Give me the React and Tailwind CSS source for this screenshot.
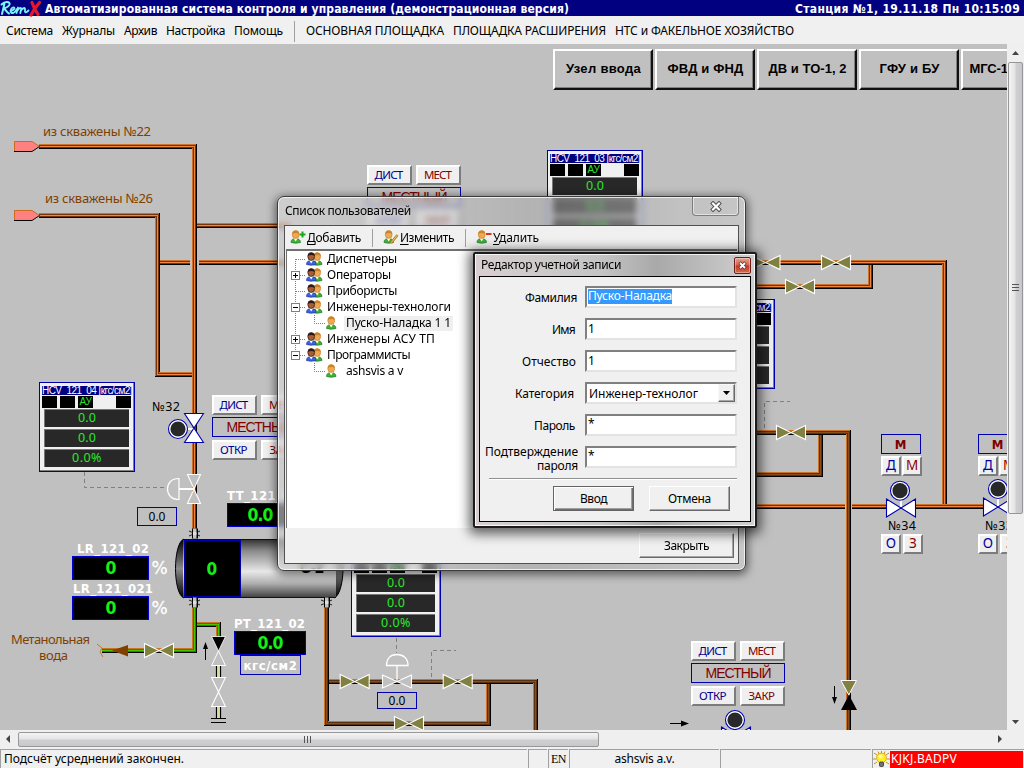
import { useLayoutEffect, useRef } from "react";

const UI = "font-['Noto_Sans','DejaVu_Sans',sans-serif]";

/* Text run whose letter spacing is adjusted so it is exactly `w` pixels wide. */
function Fit({ w, children, className = "" }) {
  const ref = useRef(null);
  useLayoutEffect(() => {
    const el = ref.current;
    el.style.letterSpacing = "0px";
    const n = el.textContent.length;
    el.style.letterSpacing = (w - el.getBoundingClientRect().width) / n + "px";
  }, [w, children]);
  return (
    <span ref={ref} className={`inline-block whitespace-pre ${className}`}>
      {children}
    </span>
  );
}

/* ---------- diagram primitives ---------- */

const CORE = { gas: "#f0824c", cond: "#8a4d22", water: "#45c400" };
const EDGE = { gas: "#7a3208", cond: "#5a3212", water: "#3f7a08" };

function Pipe({ pts, kind = "gas" }) {
  const p = { points: pts, fill: "none", strokeLinejoin: "miter" };
  return (
    <g shapeRendering="crispEdges">
      <polyline {...p} stroke="#000" strokeWidth="5" />
      <polyline {...p} stroke="#cc7426" strokeWidth="4" transform="translate(-0.5 -0.5)" />
      <polyline {...p} stroke={EDGE[kind]} strokeWidth="3" />
      <polyline {...p} stroke={CORE[kind]} strokeWidth="1" />
    </g>
  );
}

function Valve({ x, y, vertical, fill = "#808040", stroke = "#fff", len = 14.5, half = 7 }) {
  return (
    <path
      transform={`translate(${x} ${y})${vertical ? " rotate(90)" : ""}`}
      d={`M${-len} ${-half}L0 0L${-len} ${half}ZM${len} ${-half}L0 0L${len} ${half}Z`}
      fill={fill}
      stroke={stroke}
      strokeWidth="1.1"
    />
  );
}

function Motor({ x, y }) {
  return (
    <g>
      <circle cx={x} cy={y} r="9.5" fill="#fff" stroke="#0000b0" strokeWidth="1.1" />
      <circle cx={x} cy={y} r="7.6" fill="#282828" />
    </g>
  );
}

function Inlet({ y }) {
  return (
    <g strokeWidth="1" fill="none">
      <path d={`M14.5 ${y - 5}H32L39.5 ${y}L32 ${y + 5}H14.5Z`} fill="#ff8080" />
      <path d={`M39.5 ${y}L32 ${y - 5}H14.5V${y + 5}`} stroke="#cc6a20" />
      <path d={`M14 ${y + 5}H32L39.5 ${y}`} stroke="#000" />
    </g>
  );
}

function Flange({ x, y }) {
  return (
    <g>
      <rect x={x - 2.5} y={y - 5} width="6" height="10" fill="#000" />
      <rect x={x - 1.5} y={y - 5} width="3.5" height="10" fill="#c4c4c4" />
      <path
        d={`M${x - 5.5} ${y - 2.5}L${x - 2} ${y - 1}H${x + 2}L${x + 5.5} ${y - 2.5}M${x - 5.5} ${y + 2.5}L${x - 2} ${y + 1}H${x + 2}L${x + 5.5} ${y + 2.5}`}
        fill="none"
        stroke="#111"
        strokeWidth="0.9"
      />
      <rect x={x - 1.5} y={y - 1.5} width="3.500" height="3" fill="#e0e0e0" />
    </g>
  );
}

function Label({ x, y, w, size = 13, fill = "#804000", bold, children }) {
  return (
    <text
      x={x}
      y={y}
      fontSize={size}
      fill={fill}
      textLength={w}
      className={
        bold ? "font-['DejaVu_Sans_Condensed','DejaVu_Sans',sans-serif] font-bold" : UI
      }
    >
      {children}
    </text>
  );
}

function Percent({ x, y }) {
  return (
    <text x={x} y={y} fontSize="17" fill="#fff" stroke="#fff" strokeWidth="0.300" textLength="18" className="font-['DejaVu_Sans',sans-serif]">%</text>
  );
}

function Scheme() {
  return (
    <svg className="block" width="1007" height="686" viewBox="0 44 1007 686">
      <defs>
        <linearGradient id="tank" x1="0" y1="0" x2="0" y2="1">
          <stop offset="0" stopColor="#303030" />
          <stop offset="0.2" stopColor="#8a8a8a" />
          <stop offset="0.55" stopColor="#e8e8e8" />
          <stop offset="0.75" stopColor="#b0b0b0" />
          <stop offset="1" stopColor="#3c3c3c" />
        </linearGradient>
        <linearGradient id="cap" x1="0" y1="0" x2="0" y2="1">
          <stop offset="0" stopColor="#000" />
          <stop offset="0.5" stopColor="#8a8a8a" />
          <stop offset="1" stopColor="#000" />
        </linearGradient>
      </defs>

      <Pipe pts="160,262.5 190,262.5" />
      <Pipe pts="199,262.5 290,262.5" />
      <Pipe pts="39,146.5 194.5,146.5 194.5,530" />
      <Pipe pts="39,215.5 157.5,215.5 157.5,374.5 192,374.5" />
      <Pipe pts="197,225.5 290,225.5" />
      <Pipe pts="740,262.5 944.5,262.5 944.5,504" />
      <Pipe pts="740,286.5 870.5,286.5 870.5,265" />
      <Pipe pts="740,506.5 845,506.5" />
      <Pipe pts="852,506.5 888,506.5" />
      <Pipe pts="914,506.5 985,506.5" />
      <Pipe kind="cond" pts="740,432.5 848.5,432.5 848.5,735" />
      <Pipe kind="cond" pts="740,474.5 820.5,474.5 820.5,435" />
      <Pipe kind="cond" pts="326.5,604 326.5,723.5 488.5,723.5 488.5,684" />
      <Pipe kind="cond" pts="329,681.5 535.5,681.5 535.5,735" />
      <Pipe kind="water" pts="194.5,604 194.5,650.5 102,650.5" />
      <Pipe kind="water" pts="197,624.5 218.5,624.5 218.5,637" />

      <g fill="none" stroke="#808080" strokeDasharray="4 3">
        <path d="M84.5 472V487.5H167" />
        <path d="M764.5 428V401.5H790" />
        <path d="M396.5 638V653" />
        <path d="M431.5 677V650.5H456" />
      </g>

      <Inlet y={146.5} />
      <Inlet y={215.5} />

      {/* separator vessel */}
      <path d="M184 539C178 541 175.500 556 175.500 568.500S178 596 184 598Z" fill="url(#cap)" stroke="#000" />
      <path d="M334 539C340 541 343 556 343 568.500S340 596 334 598Z" fill="url(#cap)" stroke="#000" />
      <rect x="183" y="539" width="153" height="59" fill="url(#tank)" />
      <path d="M183 539.500H336M183 597.500H336" stroke="#111" />
      <rect x="184.500" y="540.500" width="56" height="56" fill="#000" stroke="#0000b0" />
      <Label x={206.500} y={575} w={11} size={17} fill="#14f014" bold>0</Label>
      <text x="300" y="573" fontSize="16" textLength="24" className="font-['Liberation_Sans',sans-serif] font-bold">С-2</text>

      <Flange x={194.500} y={533.500} />
      <Flange x={194.500} y={602.500} />
      <Flange x={326.500} y={602.500} />

      {/* drain branch */}
      <path d="M216.500 664V678M220.500 664V678M216.500 706V719M220.500 706V719" stroke="#000" strokeWidth="1.200" />
      <path d="M218.500 664V678M218.500 706V719" stroke="#dcdca0" strokeWidth="2.600" />
      <path d="M211 718.500H226M211 722.500H226" stroke="#000" />
      <path d="M211.500 636.500H225.500L218.500 651Z" fill="#000" stroke="#fff" strokeWidth="0.800" />
      <path d="M211.500 665.500H225.500L218.500 651Z" fill="#c0c0c0" stroke="#fff" />
      <Valve x={218.5} y={692} vertical fill="#c0c0c0" />
      <path d="M205.500 660V648" stroke="#000" />
      <path d="M205.500 642L208 649H203Z" />

      <Valve x={159} y={650.5} />
      <path d="M112 650.500L128 645V656.500Z" fill="#804000" />
      <path d="M97 644L102 648L100 652L103 657" fill="none" stroke="#cc7426" />

      <Valve x={354.7} y={681.5} />
      <Valve x={457.7} y={681.5} />
      <Valve x={409} y={723.5} />
      <Valve x={765.5} y={262.5} />
      <Valve x={836} y={262.5} />
      <Valve x={800} y={286.5} />
      <Valve x={791} y={432.5} />

      {/* control valves with diaphragm actuators */}
      <Valve x={397} y={681.5} fill="#c0c0c0" half={6.5} />
      <path d="M386.500 665.500C386.500 658 391 654.500 397 654.500S408 658 408 665.500ZM397 665.500V681" fill="#c0c0c0" stroke="#fff" strokeWidth="1.300" />
      <Valve x={194} y={489} vertical fill="#c0c0c0" half={6.5} />
      <path d="M179 478.500C171.500 478.500 167.500 483 167.500 489S171.500 499.500 179 499.500Z" fill="#c0c0c0" stroke="#fff" strokeWidth="1.200" />
      <path d="M179 489H194" stroke="#fff" strokeWidth="2" />

      {/* motor valves */}
      <path d="M187 429H194" stroke="#fff" strokeWidth="2" />
      <Valve x={194} y={428} vertical fill="#fff" stroke="#0000b0" half={9.5} />
      <Motor x={178} y={429} />
      <path d="M901 500V507M998 498V506" stroke="#fff" strokeWidth="2" />
      <Valve x={901} y={508} fill="#fff" stroke="#0000b0" half={9} />
      <Motor x={900} y={490.7} />
      <Valve x={998} y={507} fill="#fff" stroke="#0000b0" half={9} />
      <Motor x={998} y={489} />
      <Valve x={736} y={736} fill="#fff" stroke="#0000b0" half={9} />
      <Motor x={735} y={720} />

      <path d="M841 680.500H856.500L848.800 695Z" fill="#808040" stroke="#fff" />
      <path d="M841 710H857L849 695Z" />
      <path d="M834.500 686V698M670 723.500H682" stroke="#000" />
      <path d="M834.500 704L832 697H837ZM689 723.500L681 720.500V726.500Z" />

      <Label x={43} y={136} w={108}>из скважены №22</Label>
      <Label x={45} y={203} w={108}>из скважены №26</Label>
      <Label x={11} y={644} w={79}>Метанольная</Label>
      <Label x={39} y={660} w={29}>вода</Label>
      <Label x={152} y={411} w={28} size={12.500} fill="#000">№32</Label>
      <Label x={888} y={530} w={28} size={12.500} fill="#000">№34</Label>
      <Label x={985} y={530} w={28} size={12.500} fill="#000">№33</Label>

      <Label x={227} y={500} w={72} size={13} fill="#fff" bold>TT_121_02</Label>
      <Label x={77} y={553} w={72} size={13} fill="#fff" bold>LR_121_02</Label>
      <Label x={73} y={593} w={80} size={13} fill="#fff" bold>LR_121_021</Label>
      <Label x={234} y={628} w={71} size={13} fill="#fff" bold>PT_121_02</Label>
      <Percent x={151.5} y={574} />
      <Percent x={151.5} y={614} />
    </svg>
  );
}

/* ---------- diagram widgets ---------- */

const BEVEL =
  "flex items-center justify-center bg-[#efefef] border-2 border-t-white border-l-white border-r-[#7c7c7c] border-b-[#7c7c7c]";

function ModeButton({ w, red, children }) {
  return (
    <div className={`${BEVEL} h-5 w-[45px] pr-0.5 text-[11.5px] leading-none ${red ? "text-[#800000]" : "text-[#000090]"}`}>
      <Fit w={w}>{children}</Fit>
    </div>
  );
}

function ModeGroup({ className }) {
  return (
    <div className={`absolute flex w-[94px] flex-col ${className}`}>
      <div className="flex justify-between">
        <ModeButton w={28}>ДИСТ</ModeButton>
        <ModeButton w={27} red>МЕСТ</ModeButton>
      </div>
      <div className="mt-0.5 flex h-5 items-center justify-center border border-[#0000b0] font-['Liberation_Sans',sans-serif] text-[14px] leading-none text-[#800000]">
        <Fit w={65}>МЕСТНЫЙ</Fit>
      </div>
      <div className="mt-[3px] flex justify-between">
        <ModeButton w={27}>ОТКР</ModeButton>
        <ModeButton w={26} red>ЗАКР</ModeButton>
      </div>
    </div>
  );
}

function SmallButton({ red, children }) {
  return (
    <div className={`${BEVEL} size-5 text-[13.5px] leading-none ${red ? "text-[#900000]" : "text-[#0000a0]"}`}>{children}</div>
  );
}

function MiniGroup({ className }) {
  return (
    <div className={`absolute flex w-[42px] flex-col ${className}`}>
      <div className="flex h-5 w-10 items-center justify-center border border-[#0000b0] pr-px font-['DejaVu_Sans_Condensed','DejaVu_Sans',sans-serif] text-[13px] font-bold leading-none text-[#800000]">М</div>
      <div className="mt-0.5 flex gap-px">
        <SmallButton>Д</SmallButton>
        <SmallButton red>М</SmallButton>
      </div>
      <div className="mt-[58px] flex gap-0.5">
        <SmallButton>О</SmallButton>
        <SmallButton red>З</SmallButton>
      </div>
    </div>
  );
}

function Bar({ children }) {
  return (
    <div className="flex h-[18px] items-center justify-center border-l border-t border-[#777] bg-[#282828] text-[12.5px] leading-none text-[#28e828]">
      {children}
    </div>
  );
}

function Controller({ title, className }) {
  return (
    <div className={`absolute flex h-[90px] flex-col border border-[#0000b0] bg-[#f0f0f0] shadow-[inset_-1px_-1px_0_#808080] ${className}`}>
      <div className="mx-0.5 mt-[3px] flex h-[9px] items-center overflow-hidden bg-[#000080] pt-px font-['Liberation_Sans',sans-serif] text-[10px] leading-none text-white">
        <Fit w={90}>{title}</Fit>
      </div>
      <div className="ml-0.5 mr-[3px] mt-px flex h-3 gap-[3px]">
        <div className="w-[15px] bg-black" />
        <div className="w-[15px] bg-black" />
        <div className="flex w-[15px] items-center justify-center bg-black font-['Liberation_Sans',sans-serif] text-[10px] leading-none text-[#28e828]"><Fit w={12}>АУ</Fit></div>
        <div className="ml-auto w-[15px] bg-black" />
      </div>
      <div className="ml-1 mr-[5px] mt-[1px] flex flex-col gap-0.5">
        <Bar><Fit w={18}>0.0</Fit></Bar>
        <Bar><Fit w={18}>0.0</Fit></Bar>
        <Bar><Fit w={30}>0.0%</Fit></Bar>
      </div>
    </div>
  );
}

function Display({ className, w, children }) {
  return (
    <div className={`absolute flex h-6 items-center justify-center border border-[#0000d0] bg-black pt-0.5 font-['DejaVu_Sans_Condensed','DejaVu_Sans',sans-serif] text-[17.5px] font-bold leading-none text-[#14f014] ${className}`}>
      <Fit w={w}>{children}</Fit>
    </div>
  );
}

function NavButton({ w, children }) {
  return (
    <div className="flex h-[41px] w-[100px] shrink-0 items-center justify-center border-2 border-b-[#101010] border-l-white border-r-[#101010] border-t-white bg-[#c0c0c0] pb-0.5 pl-px font-['Liberation_Sans',sans-serif] text-[13px] font-bold leading-none text-black shadow-[inset_-1px_-1px_0_#808080]">
      <Fit w={w}>{children}</Fit>
    </div>
  );
}

/* ---------- icons ---------- */

function Person({ x = 0, hair = "#c8842c", skin = "#f0a850", body = "#3fae3a", dark = "#1f7a28" }) {
  return (
    <g transform={`translate(${x} 0)`}>
      <path d="M0.500 12.500C0.500 9.500 2.500 8.500 5 8.500S10 9.500 10 12.500Q5 14 0.500 12.500Z" fill={body} stroke={dark} strokeWidth="0.700" />
      <path d="M3 8L5.200 11.500L7.300 8Z" fill="#fff" />
      <ellipse cx="5.200" cy="4.500" rx="3.400" ry="4" fill={skin} stroke={hair} strokeWidth="0.700" />
      <path d="M1.800 4C1.500 0 8.800 -0.500 8.700 4C7 2.600 4 2.500 1.800 4Z" fill={hair} />
    </g>
  );
}

function UserIcon() {
  return (
    <svg width="11" height="14" viewBox="0 0 11 14" className="shrink-0">
      <Person />
    </svg>
  );
}

function GroupIcon() {
  return (
    <svg width="17" height="14" viewBox="0 0 17 14" className="shrink-0">
      <Person x={6} />
      <Person x={0} hair="#2a1a18" skin="#a85c30" body="#3b62e0" dark="#1c389a" />
    </svg>
  );
}

function ActionIcon({ kind }) {
  return (
    <svg width="16" height="15" viewBox="0 0 16 15" className="shrink-0">
      <Person x={0.5} />
      {kind === "add" && <path d="M9.500 4.500H15.500M12.500 1.500V7.500" stroke="#18a818" strokeWidth="2" />}
      {kind === "edit" && (
        <>
          <path d="M8 13L14.500 5" stroke="#b07818" strokeWidth="2.400" />
          <path d="M8.200 12.600L14.300 5.200" stroke="#f6d060" strokeWidth="1" />
        </>
      )}
      {kind === "del" && <path d="M10 4H15.500" stroke="#e03020" strokeWidth="2" />}
    </svg>
  );
}

function Logo() {
  return (
    <svg width="42" height="17" viewBox="0 0 42 17" className="shrink-0" fill="none" strokeLinecap="round" strokeLinejoin="round">
      <path d="M4.500 3.500L2 14M1.500 4.500C5 0.800 10.500 1.500 9.500 4.500C8.500 7 5.500 8 3.500 8.500C6 9.500 7 12.500 9 13.500" stroke="#7ff4ff" strokeWidth="2" />
      <path d="M10.500 11C13.500 10.500 15.500 8.500 14 7.500C12 7 10 10 10.800 12C12 14.300 15 12.500 17 9M18 7.500L16.500 13M17.500 10.500C20 7 21.500 7 21 10L20.300 13M21 10.500C23.500 7 25.500 7.500 25 10C24.500 12.500 25.500 13.500 28.500 10.500" stroke="#7ff4ff" strokeWidth="1.800" />
      <path d="M32 2.500C33.500 7 35.500 11 38 14.500M39.500 2.500C36.500 6 33.500 10 31 15" stroke="#e81428" strokeWidth="3.200" />
    </svg>
  );
}

function BulbIcon() {
  return (
    <svg width="17" height="17" viewBox="0 0 17 17" className="shrink-0">
      <path d="M8.500 0V3M1 2L4 4M16 2L13 4M0 8H3M17 8H14M1 13L4 11M16 13L13 11M5 0.500L6 3M12 0.500L11 3" stroke="#c89020" />
      <circle cx="8.500" cy="7" r="4.900" fill="#ffee20" stroke="#d0a010" strokeWidth="0.800" />
      <ellipse cx="7.500" cy="5.500" rx="2" ry="1.800" fill="#fffcc0" />
      <rect x="6.500" y="11" width="4" height="4.500" rx="1" fill="#707070" stroke="#333" strokeWidth="0.800" />
    </svg>
  );
}

/* ---------- windows ---------- */

function TreeRow({ kind, expander, w, selected, last, children }) {
  const child = kind === "user";
  return (
    <div className="flex h-4 items-center">
      <svg width={child ? 39 : 19} height="16" className="shrink-0">
        <g stroke="#808080" strokeDasharray="1 1" fill="none">
          {child ? (
            <>
              <path d="M27.500 0V8.500H38" />
              {!last && <path d="M8.500 0V16" />}
            </>
          ) : (
            <path d={`M8.500 ${kind === "first" ? 8 : 0}V${last ? 8 : 16}M9 8.500H19`} />
          )}
        </g>
        {expander && (
          <>
            <rect x="4.500" y="4.500" width="8" height="8" fill="#fff" stroke="#808080" />
            <path d={expander === "+" ? "M6 8.500H11M8.500 6V11" : "M6 8.500H11"} stroke="#000" />
          </>
        )}
      </svg>
      {child ? <UserIcon /> : <GroupIcon />}
      <div className={`flex h-[15px] items-center leading-none ${child ? "ml-[7px] px-0.5" : "ml-1"} ${selected ? "bg-[#efefef]" : ""}`}>
        <Fit w={w}>{children}</Fit>
      </div>
    </div>
  );
}

function ToolItem({ kind, w, first, rest }) {
  return (
    <div className="flex items-center gap-px">
      <ActionIcon kind={kind} />
      <Fit w={w}><u className="underline-offset-2">{first}</u>{rest}</Fit>
    </div>
  );
}

function UsersWindow() {
  return (
    <div className={`absolute left-[277px] top-[196px] flex h-[375px] w-[469px] flex-col rounded-[7px] border border-[#3c3c3c] bg-[linear-gradient(90deg,rgba(215,215,215,.6),rgba(165,165,165,.5)_55%,rgba(205,205,205,.55))] text-[12px] leading-none text-black shadow-[0_2px_9px_2px_rgba(0,0,0,.5),inset_0_0_0_1px_rgba(255,255,255,.75)] backdrop-blur-[3px] ${UI}`}>
      <div className="flex h-7 items-start justify-between pl-[7px] pr-[6px]">
        <div className="pt-[8px]"><Fit w={126}>Список пользователей</Fit></div>
        <div className="flex h-[19px] w-[47px] items-center justify-center rounded-b-[4px] border border-t-0 border-[#7d7d7d] shadow-[inset_0_0_0_1px_rgba(255,255,255,.5)]">
          <svg width="12" height="11" viewBox="0 0 14 12">
            <path d="M3.500 2.500L10.500 9.500M10.500 2.500L3.500 9.500" stroke="#454545" strokeWidth="4.600" strokeLinecap="square" />
            <path d="M3.500 2.500L10.500 9.500M10.500 2.500L3.500 9.500" stroke="#fff" strokeWidth="2.600" strokeLinecap="square" />
          </svg>
        </div>
      </div>
      <div className="mx-[6px] mb-[6px] flex flex-1 flex-col border border-[#505050] bg-[#f0f0f0]">
        <div className="flex h-[23px] items-center pl-[5px]">
          <ToolItem kind="add" w={54} first="Д" rest="обавить" />
          <div className="ml-[11px] h-[18px] w-px bg-[#a0a0a0]" />
          <div className="ml-[10px]"><ToolItem kind="edit" w={54} first="И" rest="зменить" /></div>
          <div className="ml-[11px] h-[18px] w-px bg-[#a0a0a0]" />
          <div className="ml-[10px]"><ToolItem kind="del" w={46} first="У" rest="далить" /></div>
        </div>
        <div className="mx-px flex h-[279px] flex-col border-l border-t-2 border-[#707070] bg-white">
          <TreeRow kind="first" w={70}>Диспетчеры</TreeRow>
          <TreeRow expander="+" w={64}>Операторы</TreeRow>
          <TreeRow w={70}>Прибористы</TreeRow>
          <TreeRow expander="-" w={124}>Инженеры-технологи</TreeRow>
          <TreeRow kind="user" w={105} selected>Пуско-Наладка 1 1</TreeRow>
          <TreeRow expander="+" w={108}>Инженеры АСУ ТП</TreeRow>
          <TreeRow expander="-" last w={83}>Программисты</TreeRow>
          <TreeRow kind="user" last w={57}>ashsvis a v</TreeRow>
        </div>
        <div className="flex flex-1 items-center justify-end pr-1">
          <PushButton className="w-[95px]" w={45}>Закрыть</PushButton>
        </div>
      </div>
    </div>
  );
}

function PushButton({ className, w, focused, children }) {
  return (
    <div className={`flex h-[25px] items-center justify-center bg-[#f0f0f0] pt-px ${focused ? "border border-[#646464] shadow-[inset_1px_1px_0_#fff,inset_-1px_-1px_0_#6e6e6e,inset_-2px_-2px_0_#a0a0a0]" : "border border-b-[#696969] border-l-white border-r-[#696969] border-t-white shadow-[inset_-1px_-1px_0_#a6a6a6]"} ${className}`}>
      <Fit w={w}>{children}</Fit>
    </div>
  );
}

const FIELD =
  "flex h-[22px] w-[152px] border-2 border-b-[#e3e3e3] border-l-[#808080] border-r-[#e3e3e3] border-t-[#808080] bg-white";

function Row({ label, w, pad, children }) {
  return (
    <div className="flex h-[22px] items-center justify-end">
      <div className={`pt-0.5 ${pad}`}><Fit w={w}>{label}</Fit></div>
      {children}
    </div>
  );
}

function EditorWindow() {
  return (
    <div className={`absolute left-[473px] top-[252px] flex h-[276px] w-[284px] flex-col rounded-[2px] border-2 border-[#1c1c1c] bg-[linear-gradient(90deg,#d8cfd0,#c4c4c4_45%,#a9a9a9_65%,#d0d0d0)] text-[12px] leading-none text-black shadow-[0_2px_12px_4px_rgba(0,0,0,.6),inset_0_0_0_1px_rgba(255,255,255,.8)] ${UI}`}>
      <div className="flex h-[22px] items-center justify-between pl-[6px] pr-[4px]">
        <Fit w={140}>Редактор учетной записи</Fit>
        <div className="flex size-[17px] items-center justify-center rounded-[2px] border border-[#6a2018] bg-[linear-gradient(#e8a292,#d4614a_48%,#bf3a22_52%,#d86a50)] shadow-[inset_0_0_0_1px_rgba(255,255,255,.35)]">
          <svg width="9" height="9" viewBox="0 0 9 9">
            <path d="M1.500 1.500L7.500 7.500M7.500 1.500L1.500 7.500" stroke="#5a3a3a" strokeWidth="3.200" />
            <path d="M2 2L7 7M7 2L2 7" stroke="#fff" strokeWidth="1.800" />
          </svg>
        </div>
      </div>
      <div className="mx-[4px] mb-[4px] flex flex-1 flex-col border border-black bg-[#f0f0f0] pl-[5px] pr-[13px] pt-[9px]">
        <div className="flex flex-col gap-[10px]">
          <Row label="Фамилия" w={52} pad="pr-2">
            <div className={FIELD}>
              <div className="my-px ml-px h-[15px] bg-[#3399ff] pt-px text-white"><Fit w={84}>Пуско-Наладка</Fit></div>
            </div>
          </Row>
          <Row label="Имя" w={23} pad="pr-[10px]"><div className={`${FIELD} pl-px pt-[3px]`}>1</div></Row>
          <Row label="Отчество" w={54} pad="pr-[9px]"><div className={`${FIELD} pl-px pt-[3px]`}>1</div></Row>
          <Row label="Категория" w={59} pad="pr-[11px]">
            <div className={`${FIELD} justify-between`}>
              <div className="pl-0.5 pt-1"><Fit w={109}>Инженер-технолог</Fit></div>
              <div className="flex w-[17px] items-center justify-center border border-b-[#696969] border-l-[#f8f8f8] border-r-[#696969] border-t-[#f8f8f8] bg-[#f0f0f0] shadow-[inset_-1px_-1px_0_#a6a6a6]">
                <svg width="7" height="4"><path d="M0 0H7L3.500 4Z" /></svg>
              </div>
            </div>
          </Row>
          <Row label="Пароль" w={41} pad="pr-[10px]"><div className={`${FIELD} pl-px pt-0.5`}>*</div></Row>
          <div className="flex h-[22px] items-start justify-end">
            <div className="-mt-px flex flex-col items-end pr-[7px] leading-[14px]">
              <Fit w={93}>Подтверждение</Fit>
              <Fit w={41}>пароля</Fit>
            </div>
            <div className={`${FIELD} pl-px pt-0.5`}>*</div>
          </div>
        </div>
        <div className="ml-1 mt-[10px] h-0.5 border-b border-t border-b-white border-t-[#909090]" />
        <div className="mt-[6px] flex justify-end gap-[15px] pr-[7px]">
          <PushButton className="w-[81px]" w={27} focused>Ввод</PushButton>
          <PushButton className="w-[81px]" w={43}>Отмена</PushButton>
        </div>
      </div>
    </div>
  );
}

/* ---------- shell ---------- */

const PANEL = "border-l border-t border-[#a0a0a0] flex items-center";

export default function App() {
  return (
    <div className={`relative flex h-[768px] w-[1024px] flex-col overflow-hidden bg-[#f0f0f0] text-[12px] leading-none text-black ${UI}`}>
      <header className="flex h-[16px] items-center bg-[#000080] pr-[4px] font-['DejaVu_Sans_Condensed','DejaVu_Sans',sans-serif] text-[12px] font-bold text-white">
        <Logo />
        <div className="ml-[3px] pt-0.5"><Fit w={524}>Автоматизированная система контроля и управления (демонстрационная версия)</Fit></div>
        <div className="ml-auto pt-0.5"><Fit w={225}>Станция №1, 19.11.18 Пн 10:15:09</Fit></div>
      </header>

      <nav className="flex h-[28px] items-center pl-[6px] pt-0.5">
        <div className="flex gap-[9px]">
          <Fit w={47}>Система</Fit>
          <Fit w={53}>Журналы</Fit>
          <Fit w={33}>Архив</Fit>
          <Fit w={59}>Настройка</Fit>
          <Fit w={49}>Помощь</Fit>
        </div>
        <div className="ml-[11px] mr-[11px] h-[21px] w-px bg-[#a0a0a0]" />
        <div className="flex gap-[9px]">
          <Fit w={138}>ОСНОВНАЯ ПЛОЩАДКА</Fit>
          <Fit w={153}>ПЛОЩАДКА РАСШИРЕНИЯ</Fit>
          <Fit w={179}>НТС и ФАКЕЛЬНОЕ ХОЗЯЙСТВО</Fit>
        </div>
      </nav>

      <div className="flex h-[686px]">
        <main className="relative w-[1007px] overflow-hidden bg-[#c0c0c0]">
          <Scheme />
          <div className="absolute left-0 top-[-44px] h-[730px] w-[1007px] overflow-hidden">
            <div className="absolute left-[553px] top-[49px] flex gap-0.5">
              <NavButton w={75}>Узел ввода</NavButton>
              <NavButton w={76}>ФВД и ФНД</NavButton>
              <NavButton w={78}>ДВ и ТО-1, 2</NavButton>
              <NavButton w={60}>ГФУ и БУ</NavButton>
              <NavButton w={84}>МГС-1, МГС-2</NavButton>
            </div>
            <ModeGroup className="left-[367px] top-[165px]" />
            <ModeGroup className="left-[212px] top-[395px]" />
            <ModeGroup className="left-[691px] top-[641px]" />
            <MiniGroup className="left-[881px] top-[434px]" />
            <MiniGroup className="left-[978px] top-[434px]" />
            <Controller title="HCV_121_04 [кгс/см2]" className="left-[39px] top-[382px] w-[96px]" />
            <Controller title="HCV_121_03 [кгс/см2]" className="left-[547px] top-[150px] w-[96px]" />
            <Controller title="HCV_121_01 [кгс/см2]" className="left-[679px] top-[299px] w-[96px]" />
            <Controller title="PCV_121_02 [%]" className="left-[351px] top-[547px] w-[90px]" />
            <Display className="left-[227px] top-[503px] w-[66px]" w={25}>0.0</Display>
            <Display className="left-[72px] top-[556px] w-[77px]" w={10}>0</Display>
            <Display className="left-[72px] top-[596px] w-[77px]" w={10}>0</Display>
            <Display className="left-[234px] top-[631px] w-[72px]" w={25}>0.0</Display>
            <div className="absolute left-[240px] top-[655px] flex h-5 w-[61px] items-center justify-center border border-[#0000b0] font-['DejaVu_Sans_Condensed','DejaVu_Sans',sans-serif] text-[13px] font-bold text-white"><Fit w={54}>кгс/см2</Fit></div>
            <div className="absolute left-[137px] top-[507px] flex h-[19px] w-10 items-center justify-center border border-[#0000b0]"><Fit w={17}>0.0</Fit></div>
            <div className="absolute left-[377px] top-[692px] flex h-[17px] w-10 items-center justify-center border border-[#0000b0]"><Fit w={17}>0.0</Fit></div>
          </div>
        </main>
        <aside className="flex w-[17px] flex-col items-center bg-[#efefef]">
          <svg width="9" height="18" className="shrink-0"><path d="M1 11L4.500 7L8 11Z" fill="#444" /></svg>
          <div className="flex h-[452px] w-[15px] items-center justify-center rounded-[2px] border border-[#979797] bg-[linear-gradient(90deg,#f4f4f4,#e4e4e4_45%,#cfcfd2_55%,#c8c8cc)]">
            <svg width="7" height="9"><path d="M0 .5H7M0 3.500H7M0 6.500H7" stroke="#555" /></svg>
          </div>
          <svg width="9" height="16" className="mt-auto"><path d="M1 6L4.500 10L8 6Z" fill="#444" /></svg>
        </aside>
      </div>

      <div className="flex h-[18px] items-center bg-[#efefef]">
        <svg width="18" height="16" className="shrink-0"><path d="M10 4L6 8L10 12Z" fill="#444" /></svg>
        <div className="flex h-[15px] w-[581px] items-center justify-center rounded-[2px] border border-[#979797] bg-[linear-gradient(#f4f4f4,#e4e4e4_45%,#cfcfd2_55%,#c8c8cc)]">
          <svg width="9" height="7"><path d="M.5 0V7M3.500 0V7M6.500 0V7" stroke="#555" /></svg>
        </div>
        <svg width="16" height="16" className="ml-auto mr-[17px]"><path d="M7 4L11 8L7 12Z" fill="#444" /></svg>
      </div>

      <footer className="mt-px flex h-[19px] gap-px">
        <div className={`${PANEL} w-[527px] pl-[3px]`}><Fit w={180}>Подсчёт усреднений закончен.</Fit></div>
        <div className={`${PANEL} w-[19px]`} />
        <div className={`${PANEL} w-5 justify-center font-['Liberation_Serif',serif] text-[12px]`}><Fit w={15}>EN</Fit></div>
        <div className={`${PANEL} w-[150px] justify-center`}><Fit w={60}>ashsvis a.v.</Fit></div>
        <div className={`${PANEL} w-[151px]`} />
        <div className={`${PANEL} flex-1 pr-px`}>
          <BulbIcon />
          <div className="flex h-[17px] flex-1 items-center bg-[#ff0000] pl-px text-white"><Fit w={66}>KJKJ.BADPV</Fit></div>
        </div>
      </footer>

      <UsersWindow />
      <EditorWindow />
    </div>
  );
}
